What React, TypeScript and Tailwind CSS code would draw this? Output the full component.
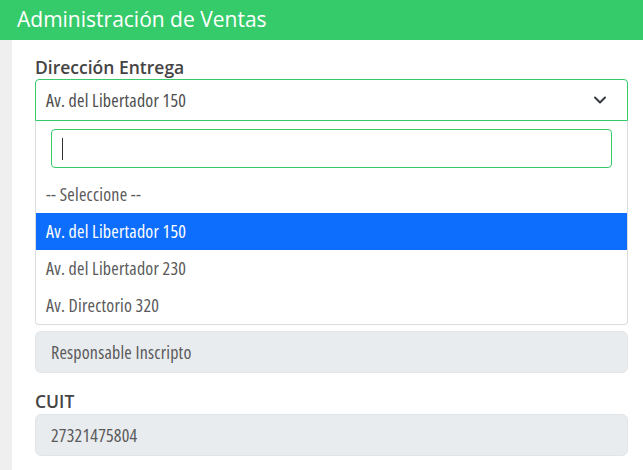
import React from "react";

const options = ["-- Seleccione --", "Av. del Libertador 150", "Av. del Libertador 230", "Av. Directorio 320"];

export default function App() {
  const selected = 1;
  return (
    <div className="w-[643px] h-[470px] overflow-hidden bg-white font-['Open_Sans',sans-serif] text-[#495057]">
      <div className="h-10 bg-[#36cb6a] flex items-center pl-[17px]">
        <h1 className="text-white text-[21px]">Administración de Ventas</h1>
      </div>
      <div className="flex h-[430px]">
        <div className="w-3 bg-[#efefef]" />
        <div className="flex-1 pl-[23px] pr-[15px] pt-[15px]">
          <label className="block text-[17.5px] font-semibold text-[#444] leading-6">Dirección Entrega</label>
          <div className="h-[42px] border border-[#36cb6a] rounded-t-[4px] flex items-center justify-between pl-[10px] pr-[20px] [font-stretch:75%] tracking-[0.2px]">
            <span className="text-[18px] text-[#4d4d4d]">Av. del Libertador 150</span>
            <svg width="14" height="10" viewBox="0 0 14 10" fill="none" stroke="#343a40" strokeWidth="2" strokeLinecap="round" strokeLinejoin="round">
              <path d="M2 2.5l5 5 5-5" />
            </svg>
          </div>
          <div className="border border-t-0 border-[#dcdcdc] rounded-b-[4px] [font-stretch:75%] tracking-[0.2px]">
            <div className="px-[15px] pt-[8px] pb-[8px]">
              <div className="h-[39px] border border-[#36cb6a] rounded-[4px] flex items-center pl-[10px]">
                <div className="w-px h-[22px] bg-[#333]" />
              </div>
            </div>
            {options.map((o, i) => (
              <div
                key={o}
                className={`h-[37px] flex items-center pl-[10px] text-[18px] ${i === selected ? "bg-[#0d6efd] text-white" : "text-[#5a5a5a]"}`}
              >
                {o}
              </div>
            ))}
          </div>
          <div className="mt-[6px] h-[42px] rounded-[6px] bg-[#e9ecef] border border-[#e2e5e8] flex items-center pl-[15px] text-[18px] text-[#5a5a5a] [font-stretch:75%] tracking-[0.2px]">
            Responsable Inscripto
          </div>
          <label className="block mt-[16px] text-[17.5px] font-semibold text-[#444] leading-6">CUIT</label>
          <div className="mt-px h-[42px] rounded-[6px] bg-[#e9ecef] border border-[#e2e5e8] flex items-center pl-[15px] text-[18px] text-[#5a5a5a] [font-stretch:75%] tracking-[0.2px]">
            27321475804
          </div>
        </div>
      </div>
    </div>
  );
}
